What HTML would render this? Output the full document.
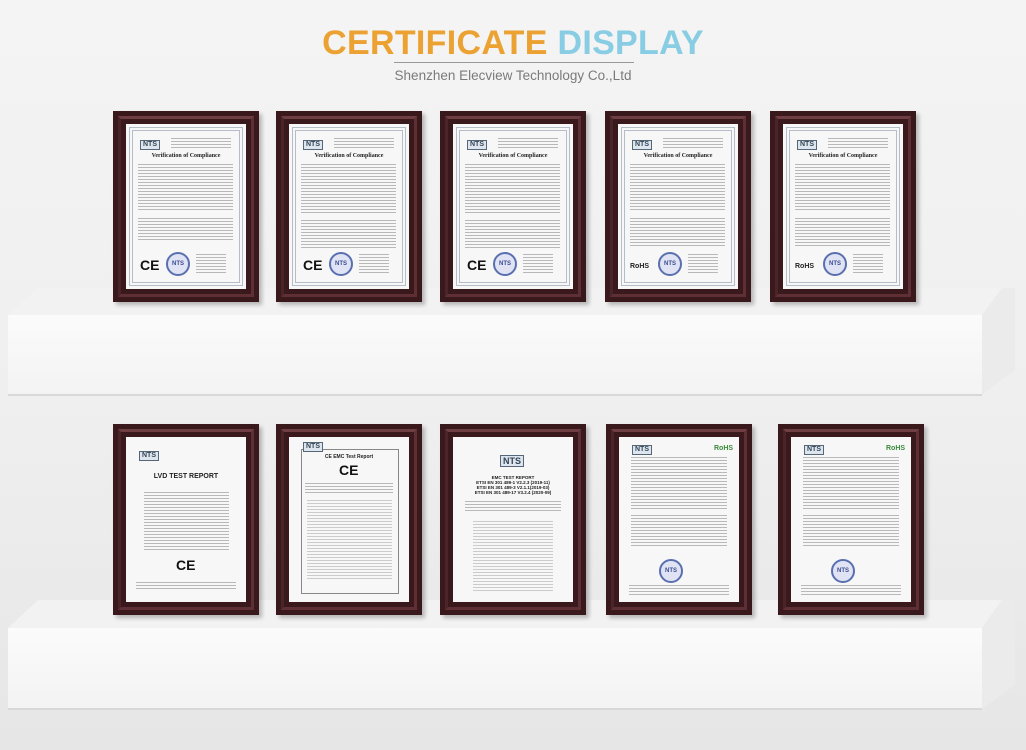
<!DOCTYPE html>
<html><head><meta charset="utf-8"><style>
*{margin:0;padding:0;box-sizing:border-box}
body{width:1026px;height:750px;overflow:hidden;position:relative;font-family:"Liberation Sans",sans-serif;background:linear-gradient(#f4f4f4 0,#efefef 400px,#e6e6e6 750px)}
.title{position:absolute;top:24px;left:0;width:1026px;text-align:center;font-size:34px;font-weight:bold;letter-spacing:0.3px}
.sub{position:absolute;top:68px;left:0;width:1026px;text-align:center;font-size:13.5px;color:#7a7a7a}
.rule{position:absolute;top:62px;left:394px;width:240px;height:1px;background:#999}
.fr{position:absolute;width:146px;height:191px;background:#3a191d;box-shadow:3px 3px 4px rgba(0,0,0,.25)}
.fr:before{content:"";position:absolute;left:5px;top:5px;right:5px;bottom:5px;border:3px solid #5e3035;border-top-color:#6e3e43;border-left-color:#4a2428}
.pp{position:absolute;left:13px;top:13px;right:13px;bottom:13px;background:#f7f7f7;overflow:hidden}
.bd{position:absolute;left:3px;top:3px;right:3px;bottom:3px;border:4px solid #b5bec8;border-style:double}
.t{position:absolute;background:repeating-linear-gradient(#b8b8b8 0 1px,transparent 1px 3px)}
.nts{position:absolute;font-weight:bold;font-size:7px;color:#345;border:1px solid #567;padding:0 2px;background:#dde6ee;line-height:8px}
.h{position:absolute;left:0;right:0;text-align:center;font-weight:bold;color:#222}
.ce{position:absolute;font-size:14px;font-weight:bold;color:#111}
.st{position:absolute;width:24px;height:24px;border-radius:50%;border:2px solid #5a6fb0;background:#dfe3f3;font-size:6px;font-weight:bold;color:#3a4c90;text-align:center;line-height:20px}
.rohs{position:absolute;font-size:7px;font-weight:bold;color:#222}
</style></head><body>
<div class="title"><span style="color:#eca232">CERTIFICATE</span> <span style="color:#88cde3">DISPLAY</span></div>
<div class="rule"></div>
<div class="sub">Shenzhen Elecview Technology Co.,Ltd</div>

<svg style="position:absolute;left:0;top:0" width="1026" height="750">
 <defs><linearGradient id="g1" x1="0" y1="0" x2="0" y2="1"><stop offset="0" stop-color="#fbfbfb"/><stop offset="1" stop-color="#f3f3f3"/></linearGradient></defs>
 <polygon points="38,288 1002,288 982,315 8,315" fill="#f2f2f2"/>
 <rect x="8" y="315" width="974" height="80" fill="url(#g1)"/>
 <polygon points="982,315 1002,288 1015,288 1015,370 982,395" fill="#ebebeb"/>
 <line x1="8" y1="395" x2="982" y2="395" stroke="#d8d8d8" stroke-width="2"/>
 <polygon points="38,600 1002,600 982,628 8,628" fill="#f2f2f2"/>
 <rect x="8" y="628" width="974" height="81" fill="url(#g1)"/>
 <polygon points="982,628 1002,600 1015,600 1015,685 982,709" fill="#ebebeb"/>
 <line x1="8" y1="709" x2="982" y2="709" stroke="#d8d8d8" stroke-width="2"/>
</svg>

<!-- top row -->
<div class="fr" style="left:113px;top:111px"><div class="pp"><div class="bd"></div>
<div class="nts" style="left:14px;top:16px">NTS</div><div class="t" style="left:45px;top:14px;width:60px;height:12px"></div>
<div class="h" style="top:29px;font-size:6px;font-family:'Liberation Serif',serif">Verification of Compliance</div>
<div class="t" style="left:12px;top:40px;width:95px;height:48px"></div>
<div class="t" style="left:12px;top:94px;width:95px;height:22px"></div>
<div class="ce" style="left:14px;top:133px">CE</div><div class="st" style="left:40px;top:128px">NTS</div>
<div class="t" style="left:70px;top:130px;width:30px;height:20px"></div></div></div>

<div class="fr" style="left:276px;top:111px"><div class="pp"><div class="bd"></div>
<div class="nts" style="left:14px;top:16px">NTS</div><div class="t" style="left:45px;top:14px;width:60px;height:12px"></div>
<div class="h" style="top:29px;font-size:6px;font-family:'Liberation Serif',serif">Verification of Compliance</div>
<div class="t" style="left:12px;top:40px;width:95px;height:50px"></div>
<div class="t" style="left:12px;top:96px;width:95px;height:28px"></div>
<div class="ce" style="left:14px;top:133px">CE</div><div class="st" style="left:40px;top:128px">NTS</div>
<div class="t" style="left:70px;top:130px;width:30px;height:20px"></div></div></div>

<div class="fr" style="left:440px;top:111px"><div class="pp"><div class="bd"></div>
<div class="nts" style="left:14px;top:16px">NTS</div><div class="t" style="left:45px;top:14px;width:60px;height:12px"></div>
<div class="h" style="top:29px;font-size:6px;font-family:'Liberation Serif',serif">Verification of Compliance</div>
<div class="t" style="left:12px;top:40px;width:95px;height:50px"></div>
<div class="t" style="left:12px;top:96px;width:95px;height:28px"></div>
<div class="ce" style="left:14px;top:133px">CE</div><div class="st" style="left:40px;top:128px">NTS</div>
<div class="t" style="left:70px;top:130px;width:30px;height:20px"></div></div></div>

<div class="fr" style="left:605px;top:111px"><div class="pp"><div class="bd"></div>
<div class="nts" style="left:14px;top:16px">NTS</div><div class="t" style="left:45px;top:14px;width:60px;height:12px"></div>
<div class="h" style="top:29px;font-size:6px;font-family:'Liberation Serif',serif">Verification of Compliance</div>
<div class="t" style="left:12px;top:40px;width:95px;height:48px"></div>
<div class="t" style="left:12px;top:94px;width:95px;height:30px"></div>
<div class="rohs" style="left:12px;top:139px">RoHS</div><div class="st" style="left:40px;top:128px">NTS</div>
<div class="t" style="left:70px;top:130px;width:30px;height:20px"></div></div></div>

<div class="fr" style="left:770px;top:111px"><div class="pp"><div class="bd"></div>
<div class="nts" style="left:14px;top:16px">NTS</div><div class="t" style="left:45px;top:14px;width:60px;height:12px"></div>
<div class="h" style="top:29px;font-size:6px;font-family:'Liberation Serif',serif">Verification of Compliance</div>
<div class="t" style="left:12px;top:40px;width:95px;height:48px"></div>
<div class="t" style="left:12px;top:94px;width:95px;height:30px"></div>
<div class="rohs" style="left:12px;top:139px">RoHS</div><div class="st" style="left:40px;top:128px">NTS</div>
<div class="t" style="left:70px;top:130px;width:30px;height:20px"></div></div></div>

<!-- bottom row -->
<div class="fr" style="left:113px;top:424px"><div class="pp">
<div class="nts" style="left:13px;top:14px">NTS</div>
<div class="h" style="top:36px;font-size:7px">LVD TEST REPORT</div>
<div class="t" style="left:18px;top:55px;width:85px;height:60px"></div>
<div class="ce" style="left:50px;top:120px">CE</div>
<div class="t" style="left:10px;top:145px;width:100px;height:8px"></div></div></div>

<div class="fr" style="left:276px;top:424px"><div class="pp"><div style="position:absolute;left:12px;top:12px;right:10px;bottom:8px;border:1px solid #888"></div>
<div class="nts" style="left:14px;top:5px">NTS</div>
<div class="h" style="top:17px;font-size:5px">CE EMC Test Report</div>
<div class="ce" style="left:50px;top:25px">CE</div>
<div class="t" style="left:16px;top:46px;width:88px;height:10px"></div>
<div class="t" style="left:18px;top:63px;width:85px;height:80px;opacity:.7"></div></div></div>

<div class="fr" style="left:440px;top:424px"><div class="pp">
<div class="nts" style="left:47px;top:18px;font-size:9px;line-height:10px">NTS</div>
<div class="h" style="top:38px;font-size:4.5px;line-height:5px">EMC TEST REPORT<br>ETSI EN 301 489-1 V2.2.3 (2019-11)<br>ETSI EN 301 489-3 V2.1.1(2019-03)<br>ETSI EN 301 489-17 V3.2.4 (2020-09)</div>
<div class="t" style="left:12px;top:64px;width:96px;height:12px"></div>
<div class="t" style="left:20px;top:84px;width:80px;height:70px;opacity:.7"></div></div></div>

<div class="fr" style="left:606px;top:424px"><div class="pp">
<div class="nts" style="left:13px;top:8px">NTS</div><div class="rohs" style="left:95px;top:8px;color:#3a8a3a">RoHS</div>
<div class="t" style="left:12px;top:20px;width:96px;height:52px"></div>
<div class="t" style="left:12px;top:78px;width:96px;height:32px"></div>
<div class="st" style="left:40px;top:122px">NTS</div>
<div class="t" style="left:10px;top:148px;width:100px;height:12px"></div></div></div>

<div class="fr" style="left:778px;top:424px"><div class="pp">
<div class="nts" style="left:13px;top:8px">NTS</div><div class="rohs" style="left:95px;top:8px;color:#3a8a3a">RoHS</div>
<div class="t" style="left:12px;top:20px;width:96px;height:52px"></div>
<div class="t" style="left:12px;top:78px;width:96px;height:32px"></div>
<div class="st" style="left:40px;top:122px">NTS</div>
<div class="t" style="left:10px;top:148px;width:100px;height:12px"></div></div></div>
</body></html>
